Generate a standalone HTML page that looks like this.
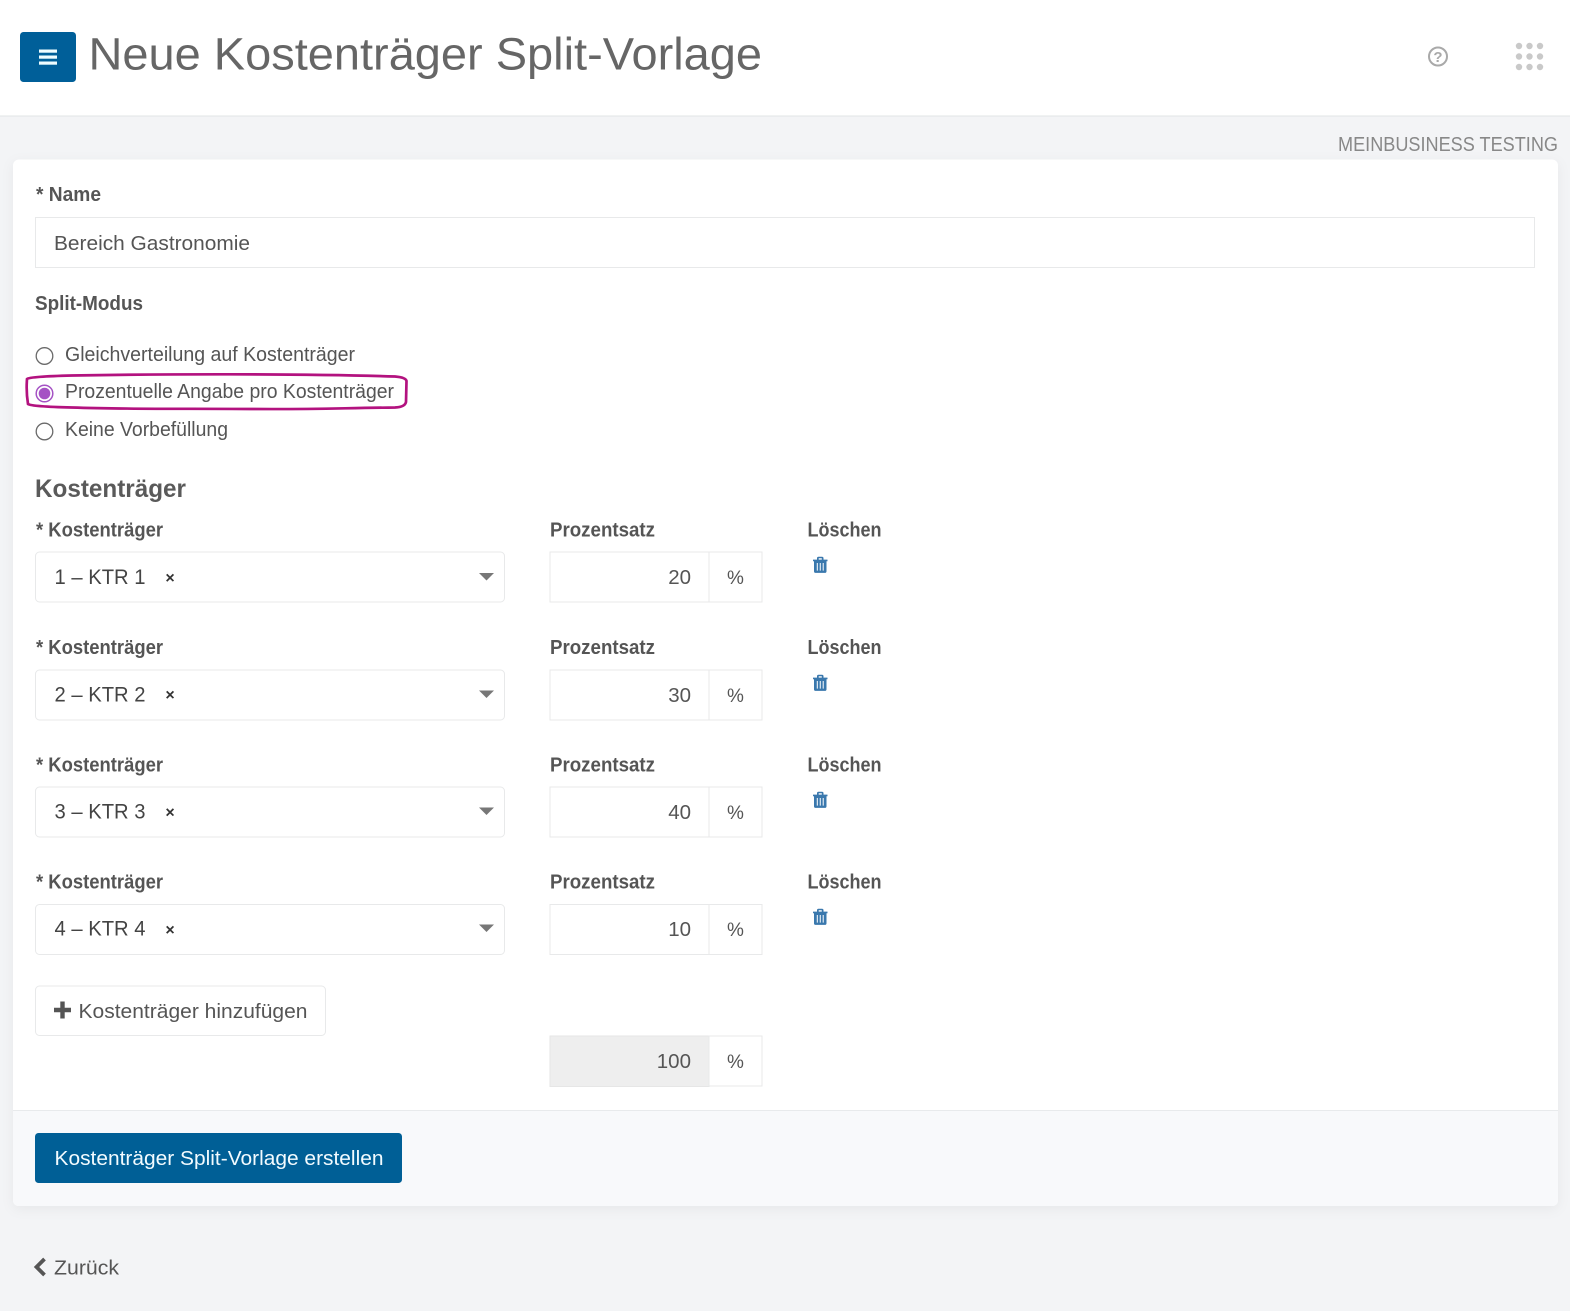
<!DOCTYPE html>
<html lang="de">
<head>
<meta charset="utf-8">
<title>Neue Kostenträger Split-Vorlage</title>
<style>
html,body{margin:0;padding:0;background:#f3f4f6;width:1570px;height:1311px;overflow:hidden}
svg{display:block}
text{font-family:"Liberation Sans",Arial,sans-serif;fill:#555;font-size:20px}
.b{font-weight:700}
.l{fill:#666;font-size:45px}
.d{fill:#444}
.box{fill:#fff;stroke:#e8e9ea;stroke-width:1}
</style>
</head>
<body>
<svg xmlns="http://www.w3.org/2000/svg" width="1570" height="1311" viewBox="0 0 1570 1311">
<defs>
<filter id="s" x="-2%" y="-3%" width="104%" height="106%"><feDropShadow dx="0" dy="3" stdDeviation="6" flood-color="#000" flood-opacity=".05"/></filter>
<g id="trash">
<path d="M1.500 3.600H5.500V2.200Q5.500 .7 7 .7H10.500Q12 .7 12 2.200V3.600H16V5.300H15V15.200Q15 16.900 13.300 16.900H4.200Q2.500 16.900 2.500 15.200V5.300H1.500ZM7.200 3.600H10.300V2.300H7.200Z" fill="#3a78ad" fill-rule="evenodd"/>
<path d="M5.800 7V14.600M8.750 7V14.600M11.700 7V14.600" stroke="#fff" stroke-width="1" fill="none"/>
</g>
</defs>
<rect width="1570" height="1311" fill="#f3f4f6"/>

<!-- Header -->
<rect width="1570" height="115.500" fill="#fff"/>
<rect y="115.500" width="1570" height="1" fill="#e2e4e6"/>
<rect x="20" y="32" width="56" height="50" rx="3.500" fill="#005f99"/>
<rect x="39" y="49.500" width="18" height="3.200" fill="#eefcff"/>
<rect x="39" y="55.500" width="18" height="3.200" fill="#eefcff"/>
<rect x="39" y="61.500" width="18" height="3.200" fill="#eefcff"/>
<text class="l" x="88.500" y="69.500" textLength="673.500" lengthAdjust="spacingAndGlyphs">Neue Kostenträger Split-Vorlage</text>
<circle cx="1438" cy="56.500" r="9" fill="none" stroke="#a9a9a9" stroke-width="2"/>
<text x="1438" y="62" text-anchor="middle" class="b" style="font-size:15px;fill:#a9a9a9">?</text>
<g fill="#c9c9c9">
<circle cx="1519" cy="46" r="3.200"/><circle cx="1529.500" cy="46" r="3.200"/><circle cx="1540" cy="46" r="3.200"/>
<circle cx="1519" cy="56.500" r="3.200"/><circle cx="1529.500" cy="56.500" r="3.200"/><circle cx="1540" cy="56.500" r="3.200"/>
<circle cx="1519" cy="67" r="3.200"/><circle cx="1529.500" cy="67" r="3.200"/><circle cx="1540" cy="67" r="3.200"/>
</g>
<text x="1338" y="151" textLength="220" lengthAdjust="spacingAndGlyphs" style="fill:#888;font-size:20px">MEINBUSINESS TESTING</text>

<!-- Card -->
<rect x="13" y="159.500" width="1545" height="1046.500" rx="6" fill="#fff" filter="url(#s)"/>
<path d="M13 1110H1558V1200Q1558 1206 1552 1206H19Q13 1206 13 1200Z" fill="#f8f9fb"/>
<rect x="13" y="1110" width="1545" height="1" fill="#e8eaec"/>

<!-- Name -->
<text class="b" x="36" y="201" textLength="65" lengthAdjust="spacingAndGlyphs">* Name</text>
<rect class="box" x="35.500" y="217.500" width="1499" height="50"/>
<text x="54" y="250" textLength="196" lengthAdjust="spacingAndGlyphs" style="font-size:20.500px">Bereich Gastronomie</text>

<!-- Split-Modus -->
<text class="b" x="35" y="310" textLength="108" lengthAdjust="spacingAndGlyphs">Split-Modus</text>
<circle cx="44.500" cy="356" r="8.300" fill="#fff" stroke="#6a6a6a" stroke-width="1.300"/>
<text x="65" y="361" textLength="290" lengthAdjust="spacingAndGlyphs">Gleichverteilung auf Kostenträger</text>
<circle cx="44.500" cy="393.500" r="8.300" fill="#fff" stroke="#a552c4" stroke-width="1.500"/>
<circle cx="44.500" cy="393.500" r="5.800" fill="#a552c4"/>
<text x="65" y="398" textLength="329" lengthAdjust="spacingAndGlyphs">Prozentuelle Angabe pro Kostenträger</text>
<circle cx="44.500" cy="431.500" r="8.300" fill="#fff" stroke="#6a6a6a" stroke-width="1.300"/>
<text x="65" y="436" textLength="163" lengthAdjust="spacingAndGlyphs">Keine Vorbefüllung</text>
<path d="M72 375.500C160 374 300 373.500 395 376.500Q406 377.500 406.500 381L406 402Q405 407 395 407.500C340 408 320 409.500 250 409C190 408.500 130 409.500 72 407.500C50 407 31 406 28 404Q26 392 27 379Q30 376.500 72 375.500Z" fill="none" stroke="#b3127f" stroke-width="2.700"/>

<text x="35" y="497" textLength="151" lengthAdjust="spacingAndGlyphs" style="font-size:25px;font-weight:700;fill:#5a5a5a">Kostenträger</text>

<!-- Row 1 -->
<text class="b" x="36" y="536.500" textLength="127" lengthAdjust="spacingAndGlyphs">* Kostenträger</text>
<text class="b" x="550" y="536.500" textLength="105" lengthAdjust="spacingAndGlyphs">Prozentsatz</text>
<text class="b" x="807.500" y="536.500" textLength="74" lengthAdjust="spacingAndGlyphs">Löschen</text>
<rect class="box" x="35.500" y="552" width="469" height="50" rx="4"/>
<text class="d" x="54.500" y="584" textLength="91" lengthAdjust="spacingAndGlyphs" style="font-size:21px">1 – KTR 1</text>
<text x="170" y="583" text-anchor="middle" class="b" style="font-size:16px;fill:#333">×</text>
<path d="M479 573H494L486.500 580.500Z" fill="#777"/>
<rect class="box" x="550" y="552" width="159" height="50"/>
<rect class="box" x="709" y="552" width="53" height="50"/>
<text x="691" y="584" text-anchor="end" style="font-size:20.500px">20</text>
<text x="735.500" y="584" text-anchor="middle" style="font-size:19px">%</text>
<use href="#trash" x="811.500" y="556"/>

<!-- Row 2 -->
<text class="b" x="36" y="654" textLength="127" lengthAdjust="spacingAndGlyphs">* Kostenträger</text>
<text class="b" x="550" y="654" textLength="105" lengthAdjust="spacingAndGlyphs">Prozentsatz</text>
<text class="b" x="807.500" y="654" textLength="74" lengthAdjust="spacingAndGlyphs">Löschen</text>
<rect class="box" x="35.500" y="670" width="469" height="50" rx="4"/>
<text class="d" x="54.500" y="701.500" textLength="91" lengthAdjust="spacingAndGlyphs" style="font-size:21px">2 – KTR 2</text>
<text x="170" y="700" text-anchor="middle" class="b" style="font-size:16px;fill:#333">×</text>
<path d="M479 690.500H494L486.500 698Z" fill="#777"/>
<rect class="box" x="550" y="670" width="159" height="50"/>
<rect class="box" x="709" y="670" width="53" height="50"/>
<text x="691" y="702" text-anchor="end" style="font-size:20.500px">30</text>
<text x="735.500" y="702" text-anchor="middle" style="font-size:19px">%</text>
<use href="#trash" x="811.500" y="674"/>

<!-- Row 3 -->
<text class="b" x="36" y="771.500" textLength="127" lengthAdjust="spacingAndGlyphs">* Kostenträger</text>
<text class="b" x="550" y="771.500" textLength="105" lengthAdjust="spacingAndGlyphs">Prozentsatz</text>
<text class="b" x="807.500" y="771.500" textLength="74" lengthAdjust="spacingAndGlyphs">Löschen</text>
<rect class="box" x="35.500" y="787" width="469" height="50" rx="4"/>
<text class="d" x="54.500" y="818.500" textLength="91" lengthAdjust="spacingAndGlyphs" style="font-size:21px">3 – KTR 3</text>
<text x="170" y="817.500" text-anchor="middle" class="b" style="font-size:16px;fill:#333">×</text>
<path d="M479 807.500H494L486.500 815Z" fill="#777"/>
<rect class="box" x="550" y="787" width="159" height="50"/>
<rect class="box" x="709" y="787" width="53" height="50"/>
<text x="691" y="819" text-anchor="end" style="font-size:20.500px">40</text>
<text x="735.500" y="819" text-anchor="middle" style="font-size:19px">%</text>
<use href="#trash" x="811.500" y="791"/>

<!-- Row 4 -->
<text class="b" x="36" y="888.500" textLength="127" lengthAdjust="spacingAndGlyphs">* Kostenträger</text>
<text class="b" x="550" y="888.500" textLength="105" lengthAdjust="spacingAndGlyphs">Prozentsatz</text>
<text class="b" x="807.500" y="888.500" textLength="74" lengthAdjust="spacingAndGlyphs">Löschen</text>
<rect class="box" x="35.500" y="904.500" width="469" height="50" rx="4"/>
<text class="d" x="54.500" y="935.500" textLength="91" lengthAdjust="spacingAndGlyphs" style="font-size:21px">4 – KTR 4</text>
<text x="170" y="935" text-anchor="middle" class="b" style="font-size:16px;fill:#333">×</text>
<path d="M479 924.500H494L486.500 932Z" fill="#777"/>
<rect class="box" x="550" y="904.500" width="159" height="50"/>
<rect class="box" x="709" y="904.500" width="53" height="50"/>
<text x="691" y="936" text-anchor="end" style="font-size:20.500px">10</text>
<text x="735.500" y="936" text-anchor="middle" style="font-size:19px">%</text>
<use href="#trash" x="811.500" y="908"/>

<!-- Add -->
<rect class="box" x="35.500" y="986" width="290" height="49.500" rx="4"/>
<path d="M54 1007.800H60.300V1001.500H64.700V1007.800H71V1012.200H64.700V1018.500H60.300V1012.200H54Z" fill="#555"/>
<text x="78.500" y="1018" textLength="229" lengthAdjust="spacingAndGlyphs" style="font-size:20.500px">Kostenträger hinzufügen</text>

<!-- Total -->
<rect x="550" y="1036" width="159" height="50.500" fill="#eee" stroke="#e6e6e6"/>
<rect class="box" x="709" y="1036" width="53" height="50"/>
<text x="691" y="1068" text-anchor="end" style="font-size:20.500px">100</text>
<text x="735.500" y="1068" text-anchor="middle" style="font-size:19px">%</text>

<!-- Submit -->
<rect x="35" y="1133" width="367" height="50" rx="3.500" fill="#005f96"/>
<text x="54.500" y="1165" textLength="329" lengthAdjust="spacingAndGlyphs" style="fill:#f2fbff;font-size:20.500px">Kostenträger Split-Vorlage erstellen</text>

<!-- Back -->
<path d="M44.500 1259L36.500 1267L44.500 1275" fill="none" stroke="#555" stroke-width="3.800"/>
<text x="54" y="1274.500" textLength="65" lengthAdjust="spacingAndGlyphs" style="font-size:20.500px">Zurück</text>
</svg>
</body>
</html>
